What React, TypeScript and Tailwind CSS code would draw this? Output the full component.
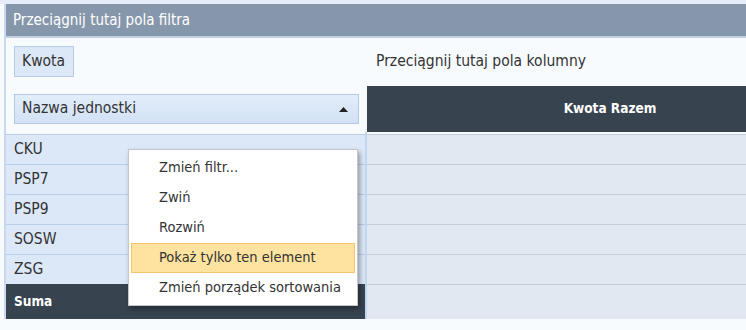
import React from "react";

const rows = ["CKU", "PSP7", "PSP9", "SOSW", "ZSG"];
const menu = ["Zmień filtr...", "Zwiń", "Rozwiń", "Pokaż tylko ten element", "Zmień porządek sortowania"];

export default function App() {
  return (
    <div
      className="relative h-[330px] w-[746px] overflow-hidden bg-[#f8fbfe] text-[15.5px] text-[#333]"
      style={{ fontFamily: '"DejaVu Sans Condensed", "DejaVu Sans", sans-serif' }}
    >
      <div className="h-[4px] bg-[#e6edf8]" />
      <div className="ml-[4px] border-l-2 border-[#c9d8ee]">
        {/* filter area header */}
        <div className="flex h-[34px] items-center border-b-2 border-[#c3d0e2] bg-[#8797ab] pl-[7px] text-[15px] text-white">
          Przeciągnij tutaj pola filtra
        </div>

        <div className="grid grid-cols-[361px_1fr]">
          {/* data field + column drop zone */}
          <div className="h-[48px] pl-[8px] pt-[8px]">
            <div className="flex h-[31px] w-[60px] items-center border border-[#b6cbe8] bg-[#dce8f8] pl-[7px]">Kwota</div>
          </div>
          <div className="flex h-[48px] items-center pl-[9px]">Przeciągnij tutaj pola kolumny</div>

          {/* row header + column header */}
          <div className="h-[46px] pl-[8px] pt-[8px]">
            <div className="flex h-[30px] w-[345px] items-center justify-between border border-[#b2c8e6] bg-gradient-to-b from-[#e3edfb] to-[#d2e1f5] pl-[7px] pr-[10px]">
              <span>Nazwa jednostki</span>
              <svg width="9" height="5" viewBox="0 0 9 5">
                <path d="M0 5 L4.5 0 L9 5 Z" fill="#222" />
              </svg>
            </div>
          </div>
          <div className="overflow-hidden bg-[#37434f]">
            <div className="flex h-[45px] w-[486px] items-center justify-center text-[13.5px] font-bold text-white">
              Kwota Razem
            </div>
          </div>

          {/* data rows */}
          <div className="border-r-2 border-[#c3d6f0] pt-[2px]">
            {rows.map((r) => (
              <div key={r} className="flex h-[30px] items-center border-t border-[#b9cde8] bg-[#dce8f8] pl-[8px]">
                {r}
              </div>
            ))}
            <div className="flex h-[35px] items-center bg-[#37434f] pl-[8px] text-[13.5px] font-bold text-white">Suma</div>
          </div>
          <div className="pt-[2px]">
            {rows.map((r) => (
              <div key={r} className="h-[30px] border-t border-[#c5ccd7] bg-[#e2e8f1]" />
            ))}
            <div className="h-[35px] border-t border-[#c5ccd7] bg-[#e2e8f1]" />
          </div>
        </div>
      </div>

      {/* context menu */}
      <div className="absolute left-[128px] top-[149px] w-[230px] border border-[#c6c6c6] bg-white pb-[2px] pt-[3px] text-[14.5px] shadow-[2px_3px_5px_rgba(0,0,0,0.35)]">
        {menu.map((m, i) => (
          <div
            key={m}
            className={
              i === 3
                ? "mx-[2px] flex h-[30px] items-center border border-[#f2c56c] bg-[#fee3a0] pl-[27px]"
                : "mx-[2px] flex h-[30px] items-center border border-transparent pl-[27px]"
            }
          >
            {m}
          </div>
        ))}
      </div>
    </div>
  );
}
